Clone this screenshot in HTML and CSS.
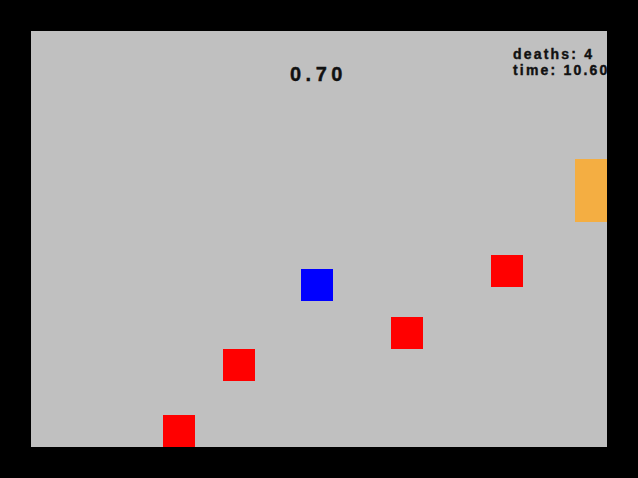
FILE: index.html
```html
<!DOCTYPE html>
<html>
<head>
<meta charset="utf-8">
<link rel="stylesheet" href="styles.css">
</head>
<body>
<div class="stage">
  <div class="timer">0.70</div>
  <div class="stats">
    <div class="line">deaths: 4</div>
    <div class="line">time: 10.60</div>
  </div>
  <div class="goal"></div>
  <div class="player"></div>
  <div class="enemy e1"></div>
  <div class="enemy e2"></div>
  <div class="enemy e3"></div>
  <div class="enemy e4"></div>
</div>
</body>
</html>
```
FILE: styles.css
```css
html, body {
  margin: 0;
  padding: 0;
  background: #000;
  width: 638px;
  height: 478px;
  overflow: hidden;
}
.stage {
  position: relative;
  margin: 31px 0 0 31px;
  width: 576px;
  height: 416px;
  background: #c0c0c0;
  overflow: hidden;
  font-family: "Liberation Sans", Arial, sans-serif;
  font-weight: bold;
  color: #111;
  -webkit-text-stroke: 0.4px #111;
}
.timer {
  position: absolute;
  left: 259px;
  top: 31px;
  font-size: 20px;
  line-height: 24px;
  letter-spacing: 4.5px;
}
.stats {
  position: absolute;
  left: 482px;
  top: 15px;
  font-size: 14px;
  line-height: 16px;
  letter-spacing: 2.2px;
  white-space: nowrap;
}
.goal {
  position: absolute;
  left: 544px;
  top: 128px;
  width: 32px;
  height: 63px;
  background: #f4ae42;
}
.player {
  position: absolute;
  left: 270px;
  top: 238px;
  width: 32px;
  height: 32px;
  background: #0000ff;
}
.enemy {
  position: absolute;
  width: 32px;
  height: 32px;
  background: #ff0000;
}
.e1 { left: 460px; top: 224px; }
.e2 { left: 360px; top: 286px; }
.e3 { left: 192px; top: 318px; }
.e4 { left: 132px; top: 384px; }
```
